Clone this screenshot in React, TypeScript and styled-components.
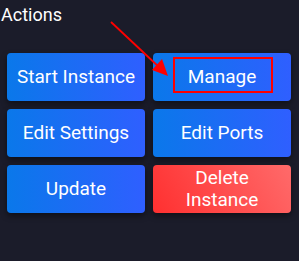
import React from "react";
import styled, { createGlobalStyle } from "styled-components";

const Global = createGlobalStyle`
  html, body { margin: 0; padding: 0; background: #1b1c2a; }
  body { font-family: Roboto, "Noto Sans", sans-serif; width: 299px; height: 261px; overflow: hidden; }
`;

const Panel = styled.div`
  position: relative;
  width: 299px;
  height: 261px;
  background: #1b1c2a;
  box-sizing: border-box;
  padding: 2px 8px 0 7px;
`;

const Title = styled.h3`
  margin: 0 0 0 -6px;
  font-size: 18px;
  font-weight: 400;
  line-height: 26px;
  color: #ffffff;
`;

const Grid = styled.div`
  margin-top: 25px;
  display: grid;
  grid-template-columns: 138px 138px;
  grid-auto-rows: 48px;
  column-gap: 8px;
  row-gap: 8px;
`;

const Button = styled.button<{ $danger?: boolean }>`
  border: none;
  border-radius: 4px;
  padding: 0 8px;
  font-family: Roboto, "Noto Sans", sans-serif;
  font-size: 19px;
  line-height: 22px;
  color: #ffffff;
  background: ${(p) =>
    p.$danger
      ? "linear-gradient(60deg, #ff3030 0%, #ff6a6a 100%)"
      : "linear-gradient(90deg, #0a78ea 0%, #2f5fff 100%)"};
  box-shadow: 0 3px 6px rgba(0, 0, 0, 0.45);
  display: flex;
  align-items: center;
  justify-content: center;
  text-align: center;
  cursor: pointer;
`;

const Highlight = styled.div`
  position: absolute;
  left: 173px;
  top: 57px;
  width: 100px;
  height: 36px;
  box-sizing: border-box;
  border: 2px solid #ff0000;
  pointer-events: none;
`;

const Arrow = styled.svg`
  position: absolute;
  left: 0;
  top: 0;
  pointer-events: none;
`;

export default function App() {
  return (
    <>
      <Global />
      <Panel>
        <Title>Actions</Title>
        <Grid>
          <Button>Start Instance</Button>
          <Button>Manage</Button>
          <Button>Edit Settings</Button>
          <Button>Edit Ports</Button>
          <Button>Update</Button>
          <Button $danger>Delete Instance</Button>
        </Grid>
        <Highlight />
        <Arrow width="299" height="261" viewBox="0 0 299 261">
          <line x1="111" y1="22" x2="160" y2="68" stroke="#ff0000" strokeWidth="1.8" />
          <polygon points="168,76 152,70 162,59" fill="#ff0000" />
        </Arrow>
      </Panel>
    </>
  );
}
